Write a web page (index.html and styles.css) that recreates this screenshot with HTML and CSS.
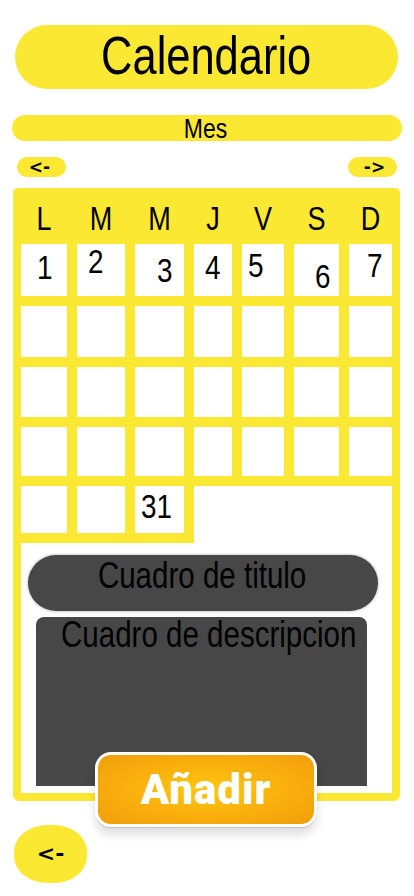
FILE: index.html
```html
<!DOCTYPE html>
<html lang="es">
<head>
<meta charset="utf-8">
<title>Calendario</title>
<link rel="stylesheet" href="styles.css">
</head>
<body>
  <header class="title-bar"><span class="narrow">Calendario</span></header>
  <div class="month-bar"><span class="narrow">Mes</span></div>
  <nav class="month-nav">
    <button class="nav-btn nav-prev">&lt;-</button>
    <button class="nav-btn nav-next">-&gt;</button>
  </nav>
  <section class="calendar">
    <div class="weekdays">
      <span class="narrow">L</span><span class="narrow">M</span><span class="narrow">M</span><span class="narrow">J</span><span class="narrow">V</span><span class="narrow">S</span><span class="narrow">D</span>
    </div>
    <div class="grid">
      <div class="day d1"><span class="narrow-l">1</span></div>
      <div class="day d2"><span class="narrow-l">2</span></div>
      <div class="day d3"><span class="narrow-l">3</span></div>
      <div class="day d4"><span class="narrow-l">4</span></div>
      <div class="day d5"><span class="narrow-l">5</span></div>
      <div class="day d6"><span class="narrow-l">6</span></div>
      <div class="day d7"><span class="narrow-l">7</span></div>
      <div class="day"></div><div class="day"></div><div class="day"></div><div class="day"></div><div class="day"></div><div class="day"></div><div class="day"></div>
      <div class="day"></div><div class="day"></div><div class="day"></div><div class="day"></div><div class="day"></div><div class="day"></div><div class="day"></div>
      <div class="day"></div><div class="day"></div><div class="day"></div><div class="day"></div><div class="day"></div><div class="day"></div><div class="day"></div>
    </div>
    <div class="last-week">
      <div class="day"></div>
      <div class="day"></div>
      <div class="day d31"><span class="narrow-l">31</span></div>
    </div>
    <div class="title-box"><span class="narrow">Cuadro de titulo</span></div>
    <div class="desc-box"><span class="narrow-l">Cuadro de descripcion</span></div>
    <button class="add-btn">Añadir</button>
  </section>
  <button class="back-btn">&lt;-</button>
</body>
</html>
```
FILE: styles.css
```css
* { box-sizing: border-box; }
body {
  margin: 0;
  width: 414px;
  background: #fff;
  font-family: "Liberation Sans", Arial, sans-serif;
  color: #000;
}
button { font: inherit; border: 0; padding: 0; cursor: pointer; }

.narrow {
  display: inline-block;
  transform: scaleX(0.82);
  transform-origin: center;
  white-space: nowrap;
}
.narrow-l {
  display: inline-block;
  transform: scaleX(0.82);
  transform-origin: left center;
  white-space: nowrap;
}

.title-bar {
  margin: 25px 0 0 15px;
  width: 383px;
  height: 64px;
  border-radius: 32px;
  background: #fbe833;
  font-size: 53px;
  line-height: 53px;
  padding-top: 4px;
  text-align: center;
  white-space: nowrap;
}

.month-bar {
  margin: 26px 0 0 12px;
  width: 390px;
  height: 26px;
  border-radius: 13px;
  background: #fbe833;
  font-size: 28px;
  line-height: 28px;
  text-align: center;
  padding-right: 4px;
}

.month-nav {
  display: flex;
  justify-content: space-between;
  margin: 16px 0 0 17px;
  width: 380px;
}
.nav-btn {
  width: 49px;
  height: 20px;
  border-radius: 10px;
  background: #fbe833;
  font-family: "DejaVu Sans", sans-serif;
  font-weight: bold;
  font-size: 17px;
  line-height: 20px;
  color: #000;
}
.nav-prev { padding-right: 4px; }
.nav-next { padding-left: 4px; }

.calendar {
  position: relative;
  margin: 11px 0 0 13px;
  width: 387px;
  border: 8px solid #fbe833;
  border-radius: 5px 5px 6px 6px;
  background: #fff;
  padding-bottom: 7px;
}

.weekdays {
  display: grid;
  grid-template-columns: 46px 48px 49px 38px 42px 45px 43px;
  column-gap: 10px;
  background: #fbe833;
  padding: 6px 0 9px;
  font-size: 33px;
  line-height: 33px;
  text-align: center;
}

.grid {
  display: grid;
  grid-template-columns: 46px 48px 49px 38px 42px 45px 43px;
  grid-template-rows: 52px 51px 50px 49px;
  gap: 10px;
  background: #fbe833;
  padding-bottom: 10px;
}
.day {
  background: #fff;
  font-size: 34px;
  line-height: 34px;
}
.d1 { padding: 6px 0 0 16px; }
.d2 { padding: 0 0 0 11px; }
.d3 { padding: 9px 0 0 22px; }
.d4 { padding: 6px 0 0 11px; }
.d5 { padding: 4px 0 0 6px; }
.d6 { padding: 15px 0 0 21px; }
.d7 { padding: 4px 0 0 18px; }
.d31 { padding: 3px 0 0 6px; }

.last-week {
  display: grid;
  grid-template-columns: 46px 48px 49px;
  grid-template-rows: 47px;
  column-gap: 10px;
  width: 173px;
  background: #fbe833;
  padding: 0 10px 10px 0;
}

.title-box {
  margin: 12px 0 0 7px;
  width: 350px;
  height: 56px;
  border-radius: 28px;
  background: #474747;
  box-shadow: 0 0 2px 1px rgba(0, 0, 0, 0.18);
  font-size: 36px;
  line-height: 42px;
  text-align: center;
  padding-right: 2px;
  white-space: nowrap;
}

.desc-box {
  margin: 6px 0 0 15px;
  width: 331px;
  height: 169px;
  border-radius: 8px 8px 0 0;
  background: #474747;
  font-size: 36px;
  line-height: 36px;
  padding-left: 25px;
  white-space: nowrap;
}

.add-btn {
  position: absolute;
  left: 74px;
  top: 556px;
  width: 222px;
  height: 75px;
  border: 3px solid #fff;
  border-radius: 16px;
  background: radial-gradient(ellipse at center, #ffc70f 0%, #f9ae0d 55%, #f09e0a 100%);
  box-shadow: 0 1px 1px rgba(0, 0, 0, 0.15), 0 8px 10px rgba(0, 0, 0, 0.12);
  font-family: Roboto, "Open Sans", sans-serif;
  font-weight: 900;
  font-size: 42px;
  line-height: 66px;
  color: #fff;
  letter-spacing: 1px;
  text-align: center;
}

.back-btn {
  display: block;
  margin: 24px 0 0 14px;
  width: 73px;
  height: 58px;
  border-radius: 46%;
  background: #fbe833;
  font-family: "DejaVu Sans", sans-serif;
  font-weight: bold;
  font-size: 22px;
  line-height: 58px;
  color: #000;
}
```
